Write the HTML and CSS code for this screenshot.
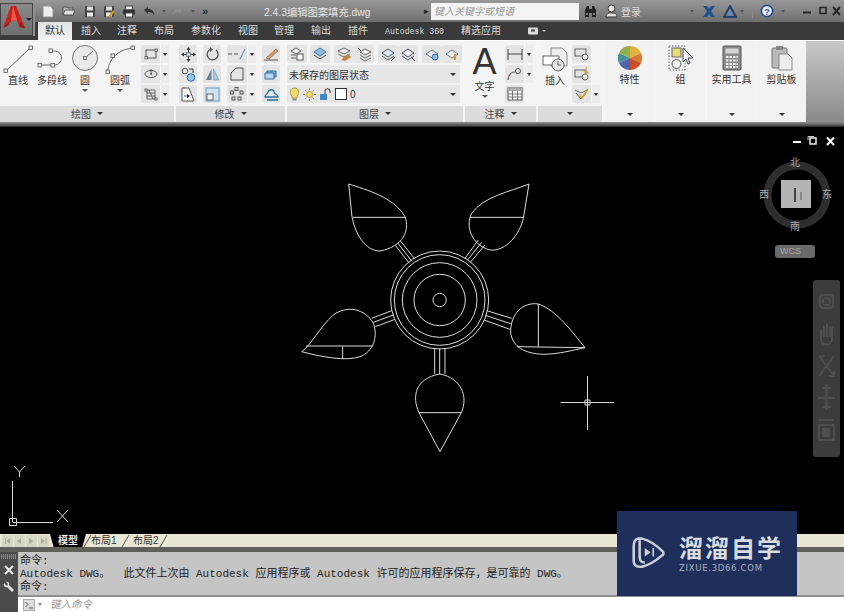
FILE: index.html
```html
<!DOCTYPE html>
<html lang="zh">
<head>
<meta charset="utf-8">
<title>AutoCAD</title>
<link rel="stylesheet" href="styles.css">
</head>
<body>
<div class="app">
  <header class="head">
    <div class="logo">
      <svg width="33" height="33" viewBox="0 0 33 33"><path d="M3 25L11 3H16L25 25L19.500 24L17 17L11 18L7 23Z" fill="#c9201c"/><path d="M13 3L11 18L17 17Z" fill="#ea5a44"/><path d="M3 25L11 18L7 23Z" fill="#7c1513"/><path d="M19.500 24L25 25L20 19Z" fill="#951a16"/><path d="M26 15h6l-3 3z" fill="#222"/></svg>
    </div>
    <div class="head-main">
      <div class="titlebar">
        <div class="qat">
          <svg class="q q-new" width="12" height="13" viewBox="0 0 12 13"><path d="M1 1H8L11 4V12H1Z" fill="#eee" stroke="#999"/></svg>
          <svg class="q q-open" width="13" height="12" viewBox="0 0 13 12"><path d="M1 2H5L6 3H11V10H1Z" fill="#bbb" stroke="#555"/><path d="M1 10L3 5H13L11 10Z" fill="#ddd" stroke="#555"/></svg>
          <svg class="q q-save" width="12" height="13" viewBox="0 0 12 13"><rect x="1" y="1" width="10" height="11" rx="1" fill="#444"/><rect x="3" y="1.500" width="6" height="4" fill="#ddd"/><rect x="3" y="7.500" width="6" height="4" fill="#eee"/></svg>
          <svg class="q q-saveas" width="12" height="13" viewBox="0 0 12 13"><rect x="1" y="1" width="10" height="11" rx="1" fill="#444"/><rect x="3" y="1.500" width="6" height="4" fill="#ddd"/><rect x="3" y="7.500" width="6" height="4" fill="#eee"/><path d="M6 12L11 6" stroke="#d49a22" stroke-width="2"/></svg>
          <svg class="q q-print" width="14" height="13" viewBox="0 0 14 13"><rect x="3.500" y="1" width="7" height="4" fill="#eee" stroke="#444"/><rect x="1" y="4.500" width="12" height="5" rx="1" fill="#333"/><rect x="3.500" y="8" width="7" height="4" fill="#fff" stroke="#444"/></svg>
          <svg class="q q-undo" width="12" height="10" viewBox="0 0 12 10"><path d="M1 4L5 1V3C9 3 11 5 11 9C9 6 8 6 5 6V8Z" fill="#333"/></svg>
          <span class="qdd q-d1"></span>
          <svg class="q q-redo" width="12" height="10" viewBox="0 0 12 10"><path d="M11 4L7 1V3C3 3 1 5 1 9C3 6 4 6 7 6V8Z" fill="#8d8d8d"/></svg>
          <span class="qdd q-d2"></span>
          <span class="more">»</span>
        </div>
        <div class="doc">2.4.3编辑图案填充.dwg</div>
        <span class="play">▸</span>
        <div class="search">键入关键字或短语</div>
        <div class="tools">
          <svg class="t-bino" width="13" height="13" viewBox="0 0 13 13"><path d="M1 12V5L3 1H5V12ZM8 12V1H10L12 5V12ZM5 4H8V8H5Z" fill="#222"/><path d="M2 9H4M9 9H11" stroke="#ddd"/></svg>
          <svg class="t-user" width="13" height="14" viewBox="0 0 13 14"><circle cx="6.500" cy="4.500" r="3.500" fill="#e6e6e6" stroke="#333"/><path d="M1 13C1 9 4 9 6.500 9S12 9 12 13Z" fill="#e6e6e6" stroke="#333"/></svg>
          <span class="login">登录</span>
          <span class="qdd t-d1"></span>
          <svg class="t-x" width="14" height="13" viewBox="0 0 14 13"><path d="M1 1H5L7 4L9 1H13L9 6.500L13 12H9L7 9L5 12H1L5 6.500Z" fill="#1f4e8c"/></svg>
          <svg class="t-a" width="14" height="13" viewBox="0 0 14 13"><path d="M7 1L13 12H1Z" fill="none" stroke="#20406e" stroke-width="2"/><circle cx="7" cy="8" r="2" fill="#5f8fc4"/></svg>
          <span class="qdd t-d2"></span>
          <span class="t-sep"></span>
          <svg class="t-help" width="14" height="14" viewBox="0 0 14 14"><circle cx="7" cy="7" r="6.500" fill="#1d4f8f"/><circle cx="7" cy="7" r="4.800" fill="#eef"/><text x="7" y="10.500" class="help-q">?</text></svg>
          <span class="qdd t-d3"></span>
          <svg class="t-win" width="38" height="10" viewBox="0 0 38 10"><path d="M0 6.500H8" stroke="#222" stroke-width="2"/><rect x="17" y="1.500" width="6" height="6" fill="none" stroke="#222" stroke-width="1.500"/><path d="M30 1L37 9M37 1L30 9" stroke="#222" stroke-width="2"/></svg>
        </div>
      </div>
      <nav class="tabs">
        <span class="tab active">默认</span>
        <span class="tab w-ins">插入</span>
        <span class="tab w-ann">注释</span>
        <span class="tab w-lay">布局</span>
        <span class="tab w-par">参数化</span>
        <span class="tab w-vie">视图</span>
        <span class="tab w-man">管理</span>
        <span class="tab w-out">输出</span>
        <span class="tab w-plu">插件</span>
        <span class="tab w-ad">Autodesk 360</span>
        <span class="tab w-app">精选应用</span>
        <svg class="tab-ico" width="18" height="8" viewBox="0 0 18 8"><rect x="0" y="0.500" width="10" height="7" rx="1" fill="#ddd"/><rect x="3" y="2.500" width="4" height="2" fill="#444"/><path d="M14 3h4l-2 2z" fill="#bbb"/></svg>
      </nav>
    </div>
  </header>

  <section class="ribbon">
    <div class="panel p-draw">
      <div class="pbody">
        <div class="big b-line"><svg width="30" height="30" viewBox="0 0 30 30"><path d="M3 26L27 3" stroke="#666" fill="none"/><rect x="1" y="24" width="3.500" height="3.500" class="nd"/><rect x="26" y="1" width="3.500" height="3.500" class="nd"/></svg><span>直线</span></div>
        <div class="big b-pl"><svg width="30" height="30" viewBox="0 0 30 30"><path d="M2 20H17C27 20 27 6 17 6H14" stroke="#666" fill="none"/><rect x="1" y="18.500" width="3.500" height="3.500" class="nd"/><rect x="14" y="18.500" width="3.500" height="3.500" class="nd"/><rect x="12" y="4" width="3.500" height="3.500" class="nd"/></svg><span>多段线</span></div>
        <div class="big b-ci"><svg width="28" height="28" viewBox="0 0 28 28"><circle cx="14" cy="14" r="12.500" fill="#eaeaea" stroke="#777"/><path d="M14 14L22 7" stroke="#666"/><rect x="12.500" y="12.500" width="3" height="3" class="nd"/></svg><span>圆</span><i class="caret"></i></div>
        <div class="big b-ar"><svg width="30" height="30" viewBox="0 0 30 30"><path d="M3 27C3 15 12 5 27 3" stroke="#666" fill="none"/><rect x="1" y="25" width="3.500" height="3.500" class="nd"/><rect x="26" y="1" width="3.500" height="3.500" class="nd"/><rect x="6" y="9" width="3.500" height="3.500" class="nd"/></svg><span>圆弧</span><i class="caret"></i></div>
        <div class="col c-draw">
          <div class="sp"><b><svg width="14" height="12" viewBox="0 0 14 12"><rect x="2" y="2" width="10" height="8" fill="none" stroke="#555"/><rect x="1" y="8.500" width="2.500" height="2.500" class="nd"/><rect x="11" y="1" width="2.500" height="2.500" class="nd"/></svg></b><i></i></div>
          <div class="sp"><b><svg width="14" height="12" viewBox="0 0 14 12"><ellipse cx="7" cy="6" rx="6" ry="3.500" fill="none" stroke="#555"/><circle cx="7" cy="6" r="1" fill="#555"/><path d="M7 1V6" stroke="#555"/></svg></b><i></i></div>
          <div class="sp"><b><svg width="14" height="13" viewBox="0 0 14 13"><path d="M3 2H11V11H3ZM3 5H11M3 8H11M5 2L9 11" fill="none" stroke="#666"/><rect x="1" y="1" width="2" height="2" class="nd"/><rect x="11" y="10" width="2" height="2" class="nd"/></svg></b><i></i></div>
        </div>
      </div>
      <div class="pfoot">绘图<i class="caret dk"></i></div>
    </div>

    <div class="panel p-mod">
      <div class="pbody grid-mod">
        <div class="sq"><svg width="15" height="15" viewBox="0 0 15 15"><path d="M7.500 1V14M1 7.500H14" stroke="#444"/><path d="M7.500 0L5.500 3H9.500ZM7.500 15L5.500 12H9.500ZM0 7.500L3 5.500V9.500ZM15 7.500L12 5.500V9.500Z" fill="#333"/><rect x="5.500" y="5.500" width="4" height="4" fill="#bcd6ec" stroke="#555" stroke-width=".6"/></svg></div>
        <div class="sq"><svg width="15" height="15" viewBox="0 0 15 15"><path d="M11 3A5.500 5.500 0 1 1 5 2.500" fill="none" stroke="#555" stroke-width="1.300"/><path d="M5 0V5L8 2.500Z" fill="#555"/></svg></div>
        <div class="sp wide"><b><svg width="18" height="12" viewBox="0 0 18 12"><path d="M0 6H4M6 6H10" stroke="#555"/><path d="M12 11L17 1" stroke="#4a7fb5"/></svg></b><i></i></div>
        <div class="sq"><svg width="16" height="15" viewBox="0 0 16 15"><path d="M1 13H15" stroke="#555"/><path d="M3 11L13 2L15 4L6 12Z" fill="#d99a6a" stroke="#8a5a30" stroke-width=".6"/></svg></div>

        <div class="sq"><svg width="15" height="15" viewBox="0 0 15 15"><circle cx="4" cy="4" r="2.800" fill="#e8e8e8" stroke="#555"/><path d="M8 2H12V6" fill="none" stroke="#333"/><circle cx="10" cy="10.500" r="3.800" fill="#9cc3e6" stroke="#2d6ea8"/></svg></div>
        <div class="sq"><svg width="15" height="15" viewBox="0 0 15 15"><path d="M6.500 2V13H1Z" fill="#68808f"/><path d="M8.500 2V13H14Z" fill="#a9c8e0" stroke="#5a8ab0" stroke-width=".5"/></svg></div>
        <div class="sp wide"><b><svg width="14" height="14" viewBox="0 0 14 14"><path d="M1 13V6L6 1H13V13Z" fill="none" stroke="#555"/></svg></b><i></i></div>
        <div class="sq"><svg width="15" height="13" viewBox="0 0 15 13"><path d="M3 3H12V9H3Z" fill="#7db2dc" stroke="#2d6ea8"/><path d="M1 5H10V11H1Z" fill="#b9d6ee" stroke="#2d6ea8"/></svg></div>

        <div class="sq"><svg width="15" height="15" viewBox="0 0 15 15"><path d="M1 1H8L13 14H1Z" fill="#f8f8f8" stroke="#555"/><path d="M3 9H8" stroke="#2d6ea8"/><path d="M9 9L6 7V11Z" fill="#222"/></svg></div>
        <div class="sq"><svg width="15" height="15" viewBox="0 0 15 15"><rect x="1" y="1" width="13" height="13" fill="#cfe2f2" stroke="#6a9cc6"/><rect x="2" y="7" width="6" height="6" fill="#f4f4f4" stroke="#666"/></svg></div>
        <div class="sp wide"><b><svg width="14" height="14" viewBox="0 0 14 14"><g fill="none" stroke="#555"><rect x="5" y="0.500" width="3" height="3"/><rect x="0.500" y="4" width="3" height="3"/><rect x="10" y="4" width="3" height="3"/><rect x="2" y="10" width="3" height="3"/><rect x="8" y="10" width="3" height="3"/></g></svg></b><i></i></div>
        <div class="sq"><svg width="15" height="13" viewBox="0 0 15 13"><path d="M1 9C1 6 4 6 4 4C5 1 10 1 10 4C10 6 14 6 14 9H1ZM3 12H14" fill="none" stroke="#2d6ea8" stroke-width="1.300"/></svg></div>
      </div>
      <div class="pfoot">修改<i class="caret dk"></i></div>
    </div>

    <div class="panel p-lay">
      <div class="pbody lay-body">
        <div class="lay-row">
          <div class="sq lq"><svg width="14" height="14" viewBox="0 0 14 14"><path d="M1 4L6 1L11 4L6 7Z" fill="#eee" stroke="#666"/><rect x="7" y="7" width="6" height="6" fill="#fff" stroke="#555"/><path d="M1 8H6M1 11H6" stroke="#666"/></svg></div>
          <div class="sq lq l-g"><svg width="16" height="14" viewBox="0 0 16 14"><path d="M2 5L8 1L14 5L8 9Z" fill="#8fbbe0" stroke="#3b6d96"/><path d="M2 8L8 12L14 8" fill="none" stroke="#444"/></svg></div>
          <div class="pair">
            <div class="sq lq"><svg width="15" height="15" viewBox="0 0 15 15"><path d="M1 4L7 1L13 4L7 7Z" fill="#eee" stroke="#666"/><path d="M1 7L7 10L13 7" fill="none" stroke="#666"/><path d="M4 13L11 7L14 10L8 14Z" fill="#c9803a"/></svg></div>
            <div class="sq lq"><svg width="15" height="15" viewBox="0 0 15 15"><path d="M3 5L8 2L14 5L8 8Z" fill="#eee" stroke="#666"/><path d="M3 8L8 11L14 8M3 11L8 14L14 11" fill="none" stroke="#666"/><path d="M1 1L4 4" stroke="#333"/></svg></div>
          </div>
          <div class="pair">
            <div class="sq lq"><svg width="15" height="15" viewBox="0 0 15 15"><path d="M1 6L7 2L13 6L7 10Z" fill="#dce9f5" stroke="#456"/><path d="M1 9L7 13L13 9" fill="none" stroke="#456"/><path d="M10 14L14 10" stroke="#222"/></svg></div>
            <div class="sq lq"><svg width="15" height="15" viewBox="0 0 15 15"><path d="M1 6L7 2L13 6L7 10Z" fill="#eee" stroke="#456"/><path d="M1 9L7 13L13 9" fill="none" stroke="#456"/><path d="M10 10L14 14" stroke="#222"/></svg></div>
          </div>
          <div class="pair">
            <div class="sq lq"><svg width="15" height="15" viewBox="0 0 15 15"><path d="M1 7L7 3L13 7L7 11Z" fill="#eee" stroke="#678"/><circle cx="10" cy="10" r="3" fill="#8fbbe0" stroke="#2d6ea8"/></svg></div>
            <div class="sq lq"><svg width="15" height="15" viewBox="0 0 15 15"><path d="M1 7L7 3L13 7L7 11Z" fill="#eee" stroke="#678"/><path d="M10 7V13" stroke="#c9a020" stroke-width="2"/></svg></div>
          </div>
        </div>
        <div class="combo">未保存的图层状态<i class="caret dk"></i></div>
        <div class="combo c2">
          <svg width="11" height="14" viewBox="0 0 11 14"><path d="M3 9C0 6 1 1 5.500 1S11 6 8 9V11H3Z" fill="#f3dc6a" stroke="#8a7a30" stroke-width=".7"/><rect x="3.500" y="11.500" width="4" height="2" fill="#888"/></svg>
          <svg width="13" height="13" viewBox="0 0 13 13"><circle cx="6.500" cy="6.500" r="3" fill="#f3dc6a" stroke="#998a30" stroke-width=".7"/><path d="M6.500 0V2M6.500 11V13M0 6.500H2M11 6.500H13M2 2L3.500 3.500M9.500 9.500L11 11M2 11L3.500 9.500M9.500 3.500L11 2" stroke="#a89530"/></svg>
          <svg width="13" height="13" viewBox="0 0 13 13"><rect x="1" y="6" width="7" height="6" fill="#3f86c4"/><path d="M6 6V3C6 0 11 0 11 3V5" fill="none" stroke="#555" stroke-width="1.200"/></svg>
          <span class="swatch"></span>
          <span class="layer0">0</span>
          <i class="caret dk"></i>
        </div>
      </div>
      <div class="pfoot">图层<i class="caret dk"></i></div>
    </div>

    <div class="panel p-ann">
      <div class="pbody">
        <div class="big b-text"><span class="bigA">A</span><span>文字</span><i class="caret"></i></div>
        <div class="col c-ann">
          <div class="sp"><b><svg width="16" height="13" viewBox="0 0 16 13"><path d="M1 1V12M15 1V12M1 6H15" stroke="#444"/></svg></b><i></i></div>
          <div class="sp"><b><svg width="16" height="14" viewBox="0 0 16 14"><path d="M1 13C2 7 4 5 8 5" fill="none" stroke="#444"/><circle cx="11" cy="4" r="2.500" fill="none" stroke="#555"/></svg></b><i></i></div>
          <div class="sp solo"><b><svg width="16" height="14" viewBox="0 0 16 14"><rect x="1" y="1" width="14" height="12" fill="#fff" stroke="#555"/><rect x="1" y="1" width="14" height="3" fill="#aaa"/><path d="M1 7H15M1 10H15M5.500 4V13M10.500 4V13" stroke="#777"/></svg></b></div>
        </div>
      </div>
      <div class="pfoot">注释<i class="caret dk"></i></div>
    </div>

    <div class="panel p-blk">
      <div class="pbody">
        <div class="big b-ins"><svg width="26" height="26" viewBox="0 0 26 26"><path d="M9 1H20L25 6V19H9Z" fill="#efefef" stroke="#888"/><rect x="1" y="9" width="16" height="9" fill="#fff" stroke="#666"/><circle cx="16" cy="18" r="6" fill="#e6e6e6" stroke="#666"/><path d="M16 14V18H19" stroke="#666" fill="none"/></svg><span>插入</span></div>
        <div class="col c-blk">
          <div class="sp solo"><b><svg width="16" height="13" viewBox="0 0 16 13"><rect x="1" y="1" width="11" height="7" fill="none" stroke="#666"/><circle cx="11" cy="9" r="3" fill="#eee" stroke="#666"/></svg></b></div>
          <div class="sp solo"><b><svg width="16" height="14" viewBox="0 0 16 14"><rect x="1" y="3" width="11" height="7" fill="none" stroke="#666"/><circle cx="11" cy="10" r="3" fill="#eee" stroke="#666"/><path d="M13 0L10 5H14L12 8" fill="none" stroke="#e2a417"/></svg></b></div>
          <div class="sp"><b><svg width="15" height="14" viewBox="0 0 15 14"><path d="M1 3L7 6L13 3M2 6L7 12L12 6" fill="none" stroke="#666"/><path d="M5 8L8 11L14 2" fill="none" stroke="#c9a020" stroke-width="1.500"/></svg></b><i></i></div>
        </div>
      </div>
      <div class="pfoot"><i class="caret dk"></i></div>
    </div>

    <div class="panel p-big">
      <div class="bigcol">
        <svg width="26" height="26" viewBox="0 0 26 26"><g><path d="M13 13L13 1A12 12 0 0 1 24 8Z" fill="#e0b23d"/><path d="M13 13L24 8A12 12 0 0 1 24 18Z" fill="#d97b2c"/><path d="M13 13L24 18A12 12 0 0 1 13 25Z" fill="#c94f28"/><path d="M13 13L13 25A12 12 0 0 1 2 18Z" fill="#4f63b0"/><path d="M13 13L2 18A12 12 0 0 1 2 8Z" fill="#4a8f9a"/><path d="M13 13L2 8A12 12 0 0 1 13 1Z" fill="#8fb04a"/></g></svg>
        <span>特性</span><i class="caret dk"></i>
      </div>
    </div>
    <div class="panel p-big">
      <div class="bigcol">
        <svg width="26" height="26" viewBox="0 0 26 26"><rect x="1" y="1" width="16" height="24" fill="none" stroke="#667" stroke-dasharray="1.500 1.500"/><rect x="4" y="3" width="9" height="9" fill="#e7dc7a" stroke="#666"/><circle cx="8.500" cy="19" r="4.500" fill="none" stroke="#555"/><path d="M15 3V17L18 14L20 19L22 18L20 13H25Z" fill="#eef" stroke="#444"/></svg>
        <span>组</span><i class="caret dk"></i>
      </div>
    </div>
    <div class="panel p-big p-util">
      <div class="bigcol">
        <svg width="26" height="26" viewBox="0 0 26 26"><rect x="4" y="1" width="18" height="24" rx="1" fill="#8c8c8c" stroke="#555"/><rect x="6.500" y="3.500" width="13" height="5" fill="#d6d6d6"/><path d="M7 12H19M7 15.500H19M7 19H19M7 22H19" stroke="#eee" stroke-width="2" stroke-dasharray="2.500 1"/></svg>
        <span>实用工具</span><i class="caret dk"></i>
      </div>
    </div>
    <div class="panel p-big">
      <div class="bigcol">
        <svg width="26" height="26" viewBox="0 0 26 26"><rect x="3" y="3" width="15" height="20" rx="1" fill="#b9b9b9" stroke="#777"/><rect x="7" y="1" width="7" height="4" fill="#888"/><path d="M10 9H19L23 13V25H10Z" fill="#eee" stroke="#888"/></svg>
        <span>剪贴板</span><i class="caret dk"></i>
      </div>
    </div>
    <div class="ribbon-rest"></div>
  </section>
  <div class="ribbon-edge"></div>

  <main class="canvas">
    <svg class="drawing" width="844" height="407" viewBox="0 0 844 407">
      <g transform="translate(290 43) scale(.33333)" class="cad">
        <circle cx="449" cy="390" r="147"/><circle cx="449" cy="390" r="136"/><circle cx="449" cy="390" r="112"/><circle cx="449" cy="390" r="77"/><circle cx="449" cy="390" r="20"/>
        <path d="M176 42C230 60 310 80 345 140C360 180 340 230 270 243C225 243 195 190 186 140Z"/>
        <path d="M188 142H348M316 226L358 280M323 219L366 274M331 212L375 268"/>
        <path d="M717 42C660 65 580 80 545 130C525 170 545 225 600 240C650 245 690 190 700 145Z"/>
        <path d="M540 142H700M525 265L565 210M533 270L575 217M541 277L585 225"/>
        <path d="M35 545C60 530 90 470 130 435C170 405 225 415 250 460C265 500 250 545 210 560C170 575 90 560 35 545Z"/>
        <path d="M48 528H250M158 530V565M245 445L305 422M250 457L310 435M256 470L315 448"/>
        <path d="M885 533C850 490 800 420 745 402C700 395 660 430 662 490C670 530 700 550 760 553C810 552 850 540 885 533Z"/>
        <path d="M680 530L885 533M745 402V530M590 422L665 445M586 436L662 461M582 450L660 478"/>
        <path d="M450 845L387 728C365 680 375 625 450 612C515 625 535 680 514 728Z"/>
        <path d="M387 728H514M434 535V612M449 535V612M465 535V612"/>
      </g>
      <g class="cad">
        <path d="M560.500 275.500H614M587.500 249V303"/>
        <rect x="585" y="273" width="5" height="5"/>
        <path d="M12.500 354V395M12.500 395.500H53M57 383L68 395M68 383L57 395M14 339L19.500 345L25 339M19.500 345V350"/>
        <rect x="9.500" y="391.500" width="7" height="7"/>
      </g>
    </svg>

    <div class="win-ctrl">
      <svg width="44" height="11" viewBox="0 0 44 11"><path d="M0 6H8" stroke="#fff" stroke-width="2"/><rect x="17" y="2" width="6" height="6" fill="none" stroke="#eee" stroke-width="1.500"/><path d="M15 4V0.500H21" fill="none" stroke="#ccc"/><path d="M34 1.500L41 9M41 1.500L34 9" stroke="#fff" stroke-width="2"/></svg>
    </div>

    <div class="cube">
      <svg class="ring" width="70" height="70" viewBox="0 0 70 70"><circle cx="35" cy="35" r="29.500" fill="none" stroke="#2e2e2e" stroke-width="8"/></svg>
      <div class="face"><span class="bar"></span><span class="bar2"></span></div>
      <span class="dir d-n">北</span><span class="dir d-s">南</span><span class="dir d-w">西</span><span class="dir d-e">东</span>
    </div>
    <div class="wcs">WCS</div>

    <div class="navbar">
      <svg width="27" height="177" viewBox="0 0 27 177">
        <g fill="none" stroke="#4e4e4e" stroke-width="2">
          <rect x="7" y="15" width="13" height="13" rx="3"/><circle cx="13.500" cy="21.500" r="3.500"/>
          <path d="M8 50V60C8 66 19 66 19 60V47M11 57V46M14 57V44M17 57V46"/>
          <path d="M6 76L21 96M21 76L6 96M7 76H12M21 91V96H16"/>
          <path d="M13.500 104V130M5 118H22M9 108H18M9 127H18"/>
          <rect x="6" y="145" width="15" height="15"/><path d="M6 140H21"/><rect x="10" y="149" width="6" height="7" fill="#4e4e4e"/>
        </g>
      </svg>
    </div>

    <div class="watermark">
      <svg width="34" height="35" viewBox="0 0 40 41"><path d="M7 3H12C20 5 30 12 36 18C38 20 37 22 35 23C28 29 20 34 12 36H9C4 36 2 33 2 29V12C2 8 3 4 7 3Z" fill="none" stroke="#ccd0d6" stroke-width="3"/><path d="M9 5V24C9 30 11 31 15 31" fill="none" stroke="#ccd0d6" stroke-width="3"/><path d="M15 14L22 19L15 24Z" fill="#ccd0d6"/><rect x="24" y="14" width="2" height="10" fill="#ccd0d6"/></svg>
      <div class="wm-text"><div class="wm-cn">溜溜自学</div><div class="wm-en">ZIXUE.3D66.COM</div></div>
    </div>
  </main>

  <div class="laybar">
    <svg class="nav-arrows" width="50" height="12" viewBox="0 0 50 12"><g fill="#d8d6c4"><rect x="2" y="0" width="11" height="12"/><rect x="14" y="0" width="11" height="12"/><rect x="26" y="0" width="11" height="12"/><rect x="38" y="0" width="11" height="12"/></g><g fill="#a9a99c"><path d="M5 3h1v6H5zM10 3V9L6.500 6zM21 3V9L17 6zM29 3V9L33 6zM41 3V9L44.500 6zM45.500 3h1v6h-1z"/></g></svg>
    <span class="ltab on">模型</span>
    <span class="ltab l1">布局1</span>
    <span class="ltab l2">布局2</span>
  </div>

  <footer class="cmd">
    <div class="cmd-side">
      <div class="grip"></div>
      <svg width="10" height="10" viewBox="0 0 10 10"><path d="M1 1L9 9M9 1L1 9" stroke="#eee" stroke-width="2"/></svg>
      <svg width="12" height="12" viewBox="0 0 12 12"><path d="M1 2L4 5L5 3L3 1C5 0 7 2 6 4L11 9L9 11L4 6C2 7 0 5 1 2Z" fill="#ddd"/></svg>
    </div>
    <div class="cmd-main">
      <div class="history">
        <div class="hline">命令:</div>
        <div class="hline">Autodesk DWG。  此文件上次由 Autodesk 应用程序或 Autodesk 许可的应用程序保存，是可靠的 DWG。</div>
        <div class="hline">命令:</div>
      </div>
      <div class="input">
        <svg width="12" height="12" viewBox="0 0 12 12"><rect x=".5" y=".5" width="11" height="11" fill="#ddd" stroke="#aaa"/><path d="M2.500 3L5 5.500L2.500 8M6 9H10" fill="none" stroke="#555"/></svg>
        <i class="mini"></i>
        <span class="prompt">键入命令</span>
      </div>
    </div>
  </footer>
</div>
</body>
</html>
```
FILE: styles.css
```css
* { box-sizing: border-box; }
html, body { margin: 0; padding: 0; }
body { width: 844px; height: 612px; overflow: hidden; font-family: "Liberation Sans", "Noto Sans CJK SC", sans-serif; }
.app { width: 844px; height: 612px; display: flex; flex-direction: column; position: relative; background: #555; }
svg { display: block; flex: none; }

/* header */
.head { height: 40px; display: flex; flex: none; background: #3b3b3b; }
.logo { width: 35px; height: 40px; padding: 3px 0 0 0; background: linear-gradient(#8f8f8f 0 36px, #3a3a3a 36px); }
.logo svg { background: linear-gradient(#8a8a8a, #6e6e6e); outline: 1px solid #444; outline-offset: -1px; }
.head-main { flex: 1; display: flex; flex-direction: column; }
.titlebar { height: 22px; display: flex; align-items: center; background: linear-gradient(#989898, #6e6e6e); color: #e4e4e4; font-size: 11px; }
.qat { display: flex; align-items: center; width: 229px; padding-left: 7px; flex: none; }
.q-open { margin-left: 8px; }
.q-save { margin-left: 9px; }
.q-saveas { margin-left: 7px; }
.q-print { margin-left: 7px; }
.q-undo { margin-left: 7px; }
.qdd { display: block; width: 0; height: 0; border: 2px solid transparent; border-top: 3px solid #555; border-bottom: 0; flex: none; }
.q-d1 { margin-left: 7px; }
.q-redo { margin-left: 6px; }
.q-d2 { margin-left: 7px; }
.more { margin-left: 7px; color: #222; font-size: 11px; font-weight: bold; }
.doc { width: 160px; flex: none; font-size: 10.300px; color: #e6e6e6; white-space: nowrap; }
.play { width: 7px; flex: none; font-size: 9px; color: #222; }
.search { width: 148px; height: 17px; flex: none; background: #f4f4f4; color: #999; font-style: italic; font-size: 10px; line-height: 17px; padding-left: 3px; }
.tools { display: flex; align-items: center; flex: 1; padding-left: 5px; }
.t-user { margin-left: 8px; }
.login { margin-left: 3px; width: 69px; font-size: 10px; color: #ddd; }
.t-x { margin-left: 8px; }
.t-a { margin-left: 7px; }
.t-d2 { margin-left: 3px; }
.t-sep { width: 1px; height: 14px; background: #8a8a8a; margin-left: 8px; }
.t-help { margin-left: 7px; }
.t-d3 { margin-left: 7px; }
.t-win { margin-left: 18px; }
.help-q { font: bold 9px "Liberation Sans", sans-serif; fill: #1d4f8f; text-anchor: middle; }

.tabs { height: 18px; display: flex; align-items: center; background: #3a3a3a; color: #dcdcdc; font-size: 10px; }
.tab { flex: none; line-height: 18px; }
.tab.active { margin-left: 3px; width: 34px; height: 18px; text-align: center; background: linear-gradient(#e2e2e2, #f2f2f2); color: #333; }
.w-ins { margin-left: 9px; }
.w-ann { margin-left: 16px; }
.w-lay { margin-left: 17px; }
.w-par { margin-left: 17px; }
.w-vie { margin-left: 17px; }
.w-man { margin-left: 16px; }
.w-out { margin-left: 17px; }
.w-plu { margin-left: 17px; }
.w-ad { margin-left: 17px; font: 8.200px "Liberation Mono", monospace; }
.w-app { margin-left: 17px; }
.tab-ico { margin-left: 27px; }

/* ribbon */
.ribbon { height: 82px; flex: none; display: flex; background: #f5f5f5; border-top: 1px solid #fff; }
.ribbon-edge { height: 5px; flex: none; background: linear-gradient(#8c8c8c, #5a5a5a 60%, #222); }
.panel { display: flex; flex-direction: column; flex: none; margin-right: 2px; background: #f4f4f4; }
.pbody { height: 65px; display: flex; }
.pfoot { flex: 1; background: #dcdcdc; color: #444; font-size: 10px; display: flex; align-items: center; justify-content: center; gap: 6px; padding-bottom: 1px; }
.p-draw { width: 174px; }
.p-mod { width: 109px; }
.p-lay { width: 176px; }
.p-ann { width: 71px; }
.p-blk { width: 64px; margin-right: 3px; }
.p-big { width: 49px; background: #f2f2f2; }
.p-util { margin-right: 1px; }
.ribbon-rest { flex: 1; margin-left: -2px; background: linear-gradient(#c8c8c8, #8a8a8a); }

.big { display: flex; flex-direction: column; align-items: center; flex: none; font-size: 10px; color: #333; line-height: 12px; padding-top: 4px; white-space: nowrap; }
.big svg { height: 30px; }
.b-line { width: 36px; }
.b-pl { width: 32px; }
.b-ci { width: 34px; }
.b-ar { width: 36px; }
.b-ci svg { margin-top: -2px; margin-bottom: 2px; }
.nd { fill: #eee; stroke: #555; stroke-width: .8; }
.caret { display: block; width: 0; height: 0; border: 3px solid transparent; border-top: 3px solid #555; border-bottom: 0; }
.caret.dk { border-top-color: #333; }
.big .caret { margin-top: 2px; }
.col { display: flex; flex-direction: column; gap: 2px; padding-top: 4px; }
.c-draw { margin-left: 3px; }
.sp { width: 28px; height: 18px; display: flex; background: #e4e4e4; border-radius: 2px; }
.sp b { flex: 1; display: flex; align-items: center; justify-content: center; }
.sp i { width: 9px; flex: none; background: #ececec; border-left: 1px solid #f8f8f8; position: relative; display: flex; align-items: center; justify-content: center; }
.sp i::after { content: ""; border: 2.500px solid transparent; border-top: 3px solid #333; border-bottom: 0; }
.sp.solo { width: 19px; }
.grid-mod { display: grid; grid-template-columns: 18px 18px 29px 18px; column-gap: 6px; row-gap: 2px; padding: 4px 0 0 3px; align-content: start; }
.grid-mod .sp { width: 29px; }
.sq { height: 18px; width: 18px; display: flex; align-items: center; justify-content: center; background: #e4e4e4; border-radius: 2px; }
.lay-body { flex-direction: column; gap: 2px; padding-top: 4px; }
.lay-row { display: flex; gap: 3px; height: 18px; flex: none; }
.lq { width: 20px; }
.pair { display: flex; margin-left: 1px; }
.combo { width: 173px; height: 18px; flex: none; display: flex; align-items: center; gap: 3px; padding: 0 4px 0 2px; background: #e6e6e6; font-size: 10px; color: #333; }
.combo > .caret { margin-left: auto; }
.swatch { width: 12px; height: 12px; background: #fff; border: 1px solid #333; }
.layer0 { font-size: 10px; }
.b-text { width: 39px; padding-top: 0; }
.bigA { font: 36px/36px "Liberation Sans", sans-serif; color: #333; height: 36px; margin-top: 3px; margin-bottom: 1px; }
.c-ann { margin-left: 1px; }
.b-ins { width: 34px; }
.b-ins svg { height: 26px; margin: 2px 0 2px; }
.c-blk { margin-left: 0; }
.bigcol { flex: 1; display: flex; flex-direction: column; align-items: center; padding: 4px 0 4px; font-size: 10px; color: #333; }
.bigcol span { margin-top: 3px; white-space: nowrap; line-height: 12px; }
.bigcol .caret { margin-top: auto; margin-bottom: 2px; }

/* canvas */
.canvas { height: 407px; flex: none; position: relative; background: #000; }
.drawing { position: absolute; left: 0; top: 0; }
.cad { fill: none; stroke: #dcdcdc; stroke-width: 1; }
.cad * { vector-effect: non-scaling-stroke; }
.win-ctrl { position: absolute; left: 793px; top: 9px; }
.cube { position: absolute; left: 762px; top: 33px; width: 70px; height: 70px; }
.ring { position: absolute; left: 0; top: 0; }
.face { position: absolute; left: 19px; top: 20px; width: 30px; height: 28px; background: #b4b4b4; }
.bar { position: absolute; left: 13px; top: 8px; width: 2px; height: 14px; background: #444; }
.bar2 { position: absolute; left: 19px; top: 12px; width: 2px; height: 8px; background: #888; }
.dir { position: absolute; font-size: 10px; line-height: 12px; color: #aaa; }
.d-n { left: 28px; top: -3px; }
.d-s { left: 28px; top: 61px; }
.d-w { left: -3px; top: 29px; }
.d-e { left: 60px; top: 29px; }
.wcs { position: absolute; left: 775px; top: 118px; width: 40px; height: 13px; border-radius: 3px; background: #6a6a6a; color: #a8a8a8; font-size: 9px; line-height: 13px; padding-left: 5px; }
.navbar { position: absolute; left: 813px; top: 153px; width: 27px; height: 177px; background: #3c3c3c; border-radius: 3px; }
.watermark { position: absolute; left: 617px; top: 384px; width: 180px; height: 85px; background: #1f2f5c; display: flex; align-items: center; gap: 13px; padding-left: 15px; z-index: 2; }
.wm-cn { font: bold 24px/26px "Noto Sans CJK SC", sans-serif; letter-spacing: 2px; color: #d8dbe0; white-space: nowrap; }
.wm-en { font: 8.500px/10px "DejaVu Sans", sans-serif; letter-spacing: .700px; color: #aab0bc; white-space: nowrap; margin-top: 3px; }

/* layout tabs */
.laybar { height: 13px; flex: none; background: #e9e6d3; display: flex; align-items: center; font-size: 10px; color: #333; }
.nav-arrows { margin-right: 0; }
.ltab { line-height: 13px; position: relative; white-space: nowrap; }
.ltab.on { width: 36px; height: 13px; text-align: center; background: #000; color: #eee; font-weight: bold; clip-path: polygon(0 0, 100% 0, 90% 100%, 10% 100%); }
.l1 { margin-left: 4px; width: 38px; padding-left: 1px; }
.l2 { width: 38px; padding-left: 5px; }
.l1::after, .l2::after { content: ""; position: absolute; right: 2px; top: 1px; height: 12px; width: 1px; background: #555; transform: skewX(-30deg); }
.l1::before { content: ""; position: absolute; left: -3px; top: 1px; height: 12px; width: 1px; background: #555; transform: skewX(-30deg); }

/* command */
.cmd { flex: 1; display: flex; border-top: 5px solid #5f6058; min-height: 0; }
.cmd-side { width: 18px; flex: none; background: #4b4b4b; display: flex; flex-direction: column; align-items: center; gap: 6px; padding-top: 2px; }
.grip { width: 16px; height: 5px; flex: none; background: repeating-linear-gradient(90deg, #888 0 1px, #4b4b4b 1px 2px); }
.cmd-main { flex: 1; display: flex; flex-direction: column; min-width: 0; }
.history { height: 45px; flex: none; background: #c5c5c5; border-bottom: 2px solid #8f8f8f; font: 11px/13px "Liberation Mono", "Noto Sans CJK SC", monospace; color: #222; padding: 3px 0 0 2px; overflow: hidden; }
.hline { white-space: pre; height: 13px; }
.input { flex: 1; background: #fff; display: flex; align-items: center; padding-left: 5px; gap: 3px; overflow: hidden; }
.mini { width: 0; height: 0; border: 2px solid transparent; border-top: 3px solid #888; border-bottom: 0; }
.prompt { margin-left: 5px; font-style: italic; color: #999; font-size: 10.500px; line-height: 13px; }
```
